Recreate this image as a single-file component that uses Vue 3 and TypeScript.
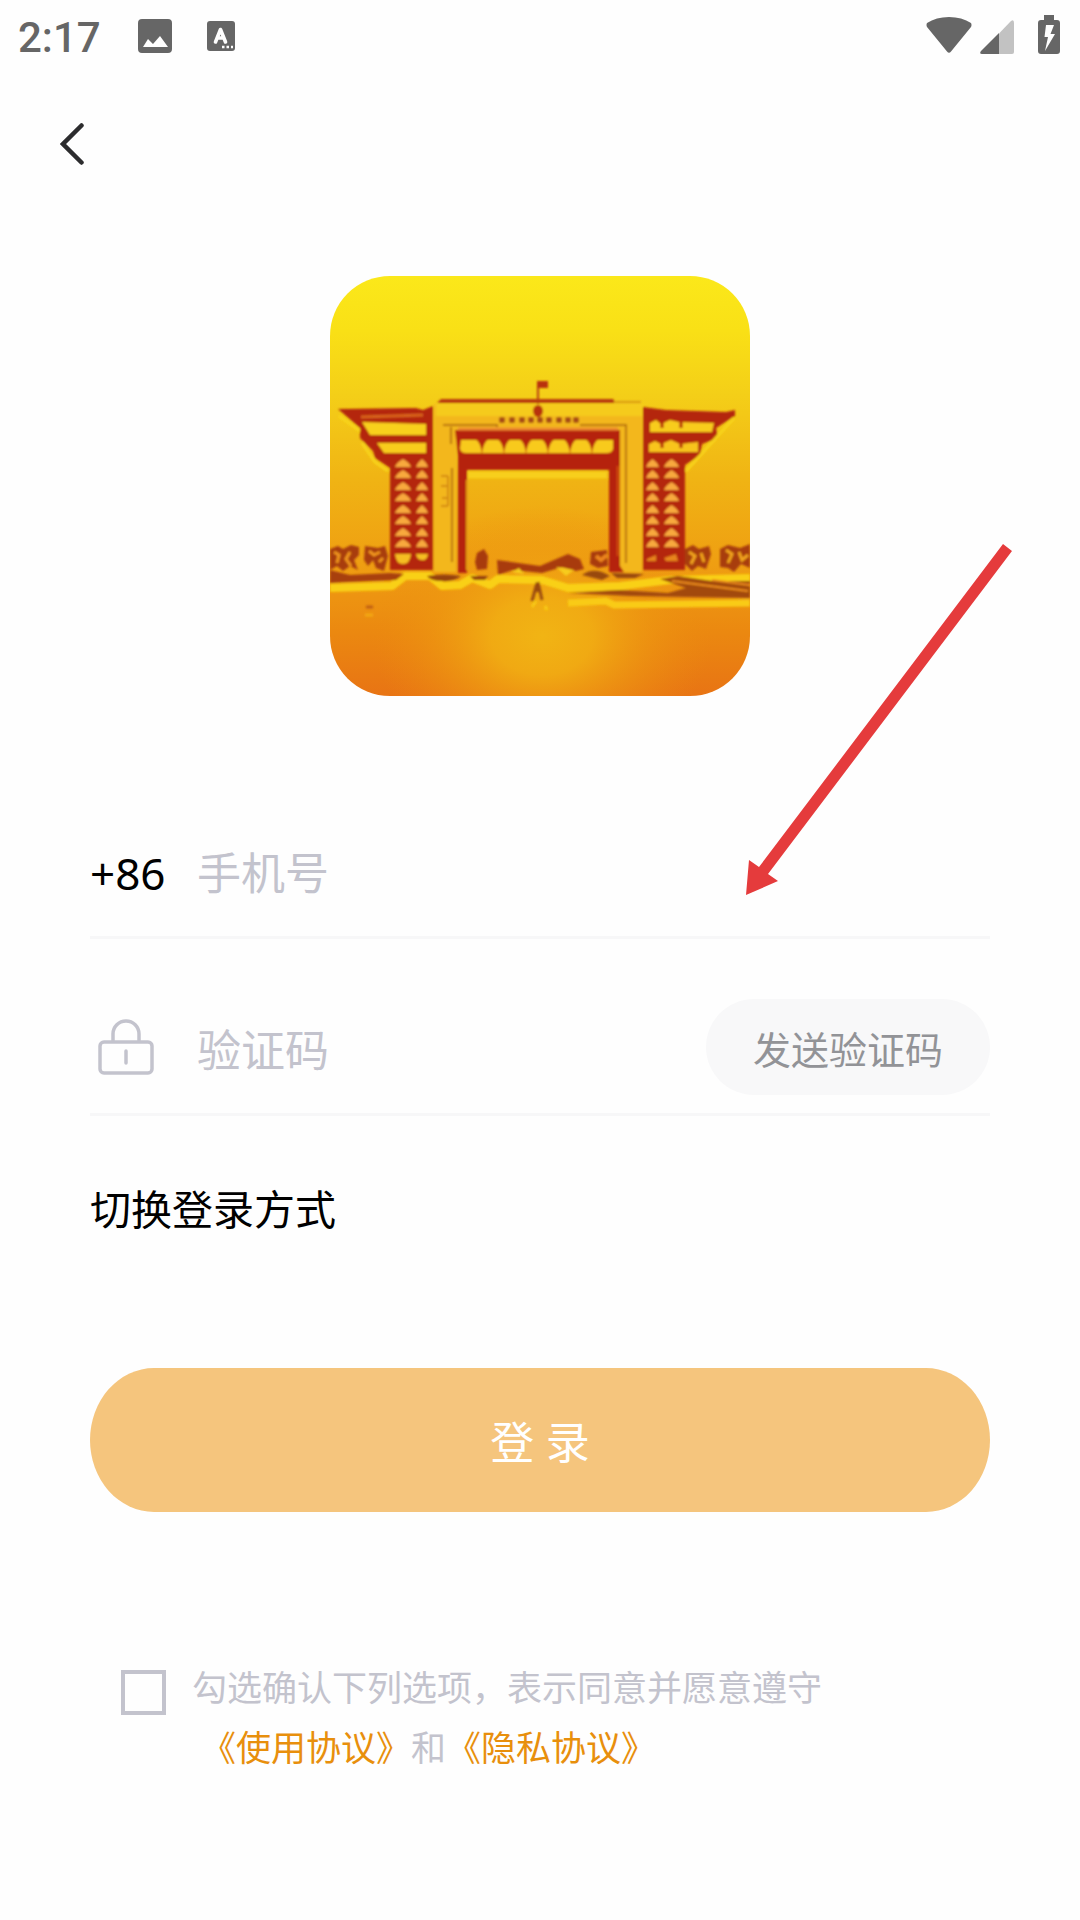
<script setup lang="ts">
import { ref } from 'vue'

const phone = ref('')
const code = ref('')
const agreed = ref(false)

const towerRows: number[] = [191, 202, 214, 225, 237, 248, 260, 271]
const signMarks: number[] = [172, 182, 192, 201, 210, 219, 229, 238, 246]
const notches: number[] = [152, 174, 196, 218, 240, 262]

function dome(x: number, y: number, w: number): string {
  const m = x + w / 2
  return `M${x} ${y} Q${x + 2} ${y - 5} ${m} ${y - 8} Q${x + w - 2} ${y - 5} ${x + w} ${y} Z`
}
</script>

<template>
  <div class="screen">
    <header class="status">
      <span class="clock">2:17</span>
      <svg class="ico-image" viewBox="0 0 34 34" aria-hidden="true">
        <path fill-rule="evenodd" d="M4 0H30Q34 0 34 4V30Q34 34 30 34H4Q0 34 0 30V4Q0 0 4 0ZM5 28H30L22 17L15 25L10 20Z" />
      </svg>
      <svg class="ico-input" viewBox="0 0 28 30" aria-hidden="true">
        <rect width="28" height="30" rx="3" />
        <path d="M8.500 21L13.500 8.500L18.500 21M10 17H17" fill="none" stroke="#fefefe" stroke-width="3.600" stroke-linecap="round" stroke-linejoin="round" />
        <path d="M15 26h2.500M19.500 26h2.500M24 26h2" stroke="#fefefe" stroke-width="2.500" />
      </svg>
      <span class="spacer"></span>
      <svg class="ico-wifi" viewBox="0 0 46 36" aria-hidden="true">
        <path d="M1 6Q10 0 23 0T45 6Q46 8 45 10L25 34.500Q23 37 21 34.500L1 10Q0 8 1 6Z" />
      </svg>
      <svg class="ico-signal" viewBox="0 0 34 34" aria-hidden="true">
        <path d="M19 13.500L31 1Q34-1 34 3V32Q34 34 32 34H19Z" fill="#c2c2c2" />
        <path d="M19 13V34H2Q-1 34 1 31Z" />
      </svg>
      <svg class="ico-battery" viewBox="0 0 22 39" aria-hidden="true">
        <path fill-rule="evenodd" d="M6 0H16V5H19Q22 5 22 8V36Q22 39 19 39H3Q0 39 0 36V8Q0 5 3 5H6ZM8 10L6.500 22H10L7 36L17 19H12.500L16 10Z" />
      </svg>
    </header>

    <nav class="nav">
      <button class="back" type="button" aria-label="返回">
        <svg viewBox="0 0 24 44" aria-hidden="true">
          <path d="M21.500 3.500L3 22L21.500 40.500" fill="none" stroke="#2c2c2e" stroke-width="4.500" stroke-linecap="round" />
        </svg>
      </button>
    </nav>

    <main class="content">
      <svg class="logo" viewBox="0 0 420 420" role="img" aria-label="校门">
        <defs>
          <linearGradient id="sky" x1="0" y1="0" x2="0" y2="1">
            <stop offset="0" stop-color="#fbe81a" />
            <stop offset="0.130" stop-color="#f9e016" />
            <stop offset="0.280" stop-color="#f4cf18" />
            <stop offset="0.480" stop-color="#f0b414" />
            <stop offset="0.680" stop-color="#ef9f12" />
            <stop offset="0.850" stop-color="#eb8810" />
            <stop offset="1" stop-color="#e87414" />
          </linearGradient>
          <radialGradient id="glow" gradientUnits="userSpaceOnUse" cx="0" cy="0" r="1" gradientTransform="translate(212 360) scale(170 130)">
            <stop offset="0" stop-color="#f1b414" />
            <stop offset="0.300" stop-color="#f1ae13" stop-opacity="0.900" />
            <stop offset="0.650" stop-color="#ee9a11" stop-opacity="0.500" />
            <stop offset="1" stop-color="#ec8c10" stop-opacity="0" />
          </radialGradient>
          <filter id="soft" x="-5%" y="-5%" width="110%" height="110%">
            <feGaussianBlur stdDeviation="1.100" />
          </filter>
          <clipPath id="frame"><rect width="420" height="420" rx="60" /></clipPath>
        </defs>
        <g clip-path="url(#frame)">
          <rect width="420" height="420" fill="url(#sky)" />
          <rect y="230" width="420" height="190" fill="url(#glow)" />
          <g filter="url(#soft)">
            <path d="M104 128H312V296H290V155H126V296H104Z" fill="#f3b71a" />
            <path d="M106 128H312V140H106Z" fill="#f5cb1c" />

            <!-- wings and towers -->
            <path d="M8 133L86 132L93 134L103 130V294H60V192L45 182L43 175L30 162V152Z" fill="#b4260e" />
            <path d="M313 131L336 134L396 136L405 134V140L386 152L388 162L372 168L370 179L355 189V294H313Z" fill="#b4260e" />
            <path d="M9 140L30 155M32 167L45 186L58 195M404 142L356 195" stroke="#f8d41a" stroke-width="3" fill="none" />
            <path d="M31 141L93 139" stroke="#d9641c" stroke-width="3" />
            <path d="M32 146L96 148V159H40Z" fill="#f8d01c" />
            <path d="M47 167H96V177H54Z" fill="#f8cc1c" />
            <path d="M320 147L326 144L331 148L340 144L349 146L384 147L382 156H320Z" fill="#f8cc1c" />
            <path d="M319 168L325 165L331 168L341 164L350 168L368 166V176H319Z" fill="#f8c41c" />
            <path d="M332 143V152M351 143V152M332 165V172M351 165V172" stroke="#b4260e" stroke-width="3" />
            <g fill="#f8a93c">
              <template v-for="y in towerRows" :key="y">
                <path :d="dome(65, y, 16)" />
                <path :d="dome(86, y, 12)" />
                <path :d="dome(316, y, 13)" />
                <path :d="dome(334, y, 15)" />
              </template>
            </g>
            <path d="M65 278H81Q80 288 73 288Q66 288 65 278ZM86 278H98Q97 285 92 284Q87 284 86 278Z" fill="#f5bd20" />
            <path d="M317 283L326 279V285H317ZM334 282L346 278L348 285H336Z" fill="#e8851c" />

            <!-- roof, flag and sign -->
            <path d="M107 127L111 123H283L286 127Z" fill="#b83a0e" />
            <path d="M284 126H311" stroke="#d99a18" stroke-width="2" />
            <path d="M208 105V128" stroke="#b8400e" stroke-width="2" />
            <path d="M207 105H218V112H207Z" fill="#b8300e" />
            <ellipse cx="208" cy="135" rx="5" ry="6" fill="#b8300e" />
            <rect v-for="x in signMarks" :key="x" :x="x - 3" y="141" width="6" height="6" rx="2" fill="#a84c12" />

            <!-- gate -->
            <path d="M113 149H167V151M250 149H296V287M121 151V168M122 192V286" stroke="#b9720f" stroke-width="2" fill="none" />
            <path d="M111 200H118M111 210H118M112 222H118M111 230H118M118 200V230" stroke="#d58b12" stroke-width="2" fill="none" />
            <path d="M125 154H290V290L294 296H279V194H137V297H128V180Z" fill="#b5210e" />
            <path d="M128 153H288" stroke="#ee8a30" stroke-width="3" />
            <path d="M131 164H283V173Q282 177 277 177H136Q130 177 130 172Z" fill="#f8ca1c" />
            <path v-for="x in notches" :key="x" :d="`M${x - 7} 163H${x + 7}Q${x + 1} 166 ${x} 178Q${x - 1} 166 ${x - 7} 163Z`" fill="#b5210e" />
            <path d="M138 199H277" stroke="#f7cf1a" stroke-width="7" />
            <path d="M137 204V294" stroke="#e39a14" stroke-width="2" />
            <path d="M288 190V280" stroke="#cc4a10" stroke-width="3" />

            <!-- trees -->
            <path d="M0 273L8 270L13 273L21 269L29 271V279L24 284L28 294L20 290L13 295L7 290L0 294ZM35 270L48 272L55 270L58 280L54 295L46 292L43 284L38 290L34 284Z" fill="#a83c10" />
            <path d="M4 276L9 279L7 287M20 276L16 283L21 290M39 275L44 279L50 276M49 286L53 282" stroke="#f0951c" stroke-width="3" fill="none" />
            <path d="M355 273L363 269L369 273L379 270L381 278L376 293L368 290L362 295L355 288ZM390 273L398 269L410 272L420 268V292L411 288L404 296L398 292L390 291Z" fill="#a83c10" />
            <path d="M359 276L365 280L361 288M371 277L374 286M396 274L402 278L398 287M409 276L412 284L418 279" stroke="#f2a51c" stroke-width="3" fill="none" />

            <!-- ground -->
            <path d="M0 312L62 310L75 300H100L112 310L130 309L142 302L160 309L168 303L212 304L238 312L290 310L340 304L420 302" fill="none" stroke="#f9d012" stroke-width="8" stroke-linejoin="round" />
            <path d="M0 294L20 299L60 297L74 298L66 304L18 306L0 307Z" fill="#a8400e" />
            <path d="M97 300Q114 297 131 300Q124 306 112 305Q100 305 97 300ZM140 300H158L155 304H144Z" fill="#96420f" />
            <path d="M147 277L154 273L158 280L157 293L147 294L145 286Z" fill="#a83a10" />
            <path d="M167 284L210 290L238 278L250 283L254 293L246 295L232 291L212 297L183 294L168 299Z" fill="#a83a10" />
            <path d="M226 291L244 294L236 300ZM182 296L189 292L194 298Z" fill="#f7cc1a" />
            <path d="M261 276L277 274L278 290L268 292L260 288Z" fill="#a83a10" />
            <path d="M266 280L271 284L277 279" stroke="#ec851a" stroke-width="4" fill="none" />
            <path d="M252 299Q264 290 280 300L272 304ZM281 297L314 298L305 302H287Z" fill="#98480e" />
            <path d="M238 317L290 314L338 317L356 312L330 303L348 300L382 305H420V322L358 321L300 320Z" fill="#a24a10" />
            <path d="M342 305L418 315M382 304L420 309" stroke="#ec8c1a" stroke-width="2" />
            <path d="M238 327L276 325L284 329L420 327" stroke="#f9cb12" stroke-width="7" fill="none" />
            <path d="M202 325L207 307L208 316M208 306L212 324" stroke="#9a4a10" stroke-width="3" fill="none" />
            <path d="M202 331L206 325M215 330L217 334" stroke="#f8ca14" stroke-width="3" />
            <path d="M36 331H43" stroke="#c0600e" stroke-width="3" />
            <path d="M35 339H43" stroke="#f3a814" stroke-width="3" />
          </g>
        </g>
      </svg>

      <form class="form" @submit.prevent>
        <div class="field">
          <label class="prefix" for="phone">+86</label>
          <input id="phone" v-model="phone" class="entry" type="tel" placeholder="手机号" />
        </div>
        <div class="field">
          <label class="badge" for="code" aria-label="验证码">
            <svg class="lock" viewBox="0 0 56 56" aria-hidden="true">
              <g fill="none" stroke="#c3c3cd" stroke-width="3.500">
                <rect x="2" y="23" width="52" height="31" rx="4" />
                <path d="M15 23V15A13 13 0 0 1 41 15V23" />
                <path d="M28 32V44" stroke-linecap="round" />
              </g>
            </svg>
          </label>
          <input id="code" v-model="code" class="entry" type="text" placeholder="验证码" />
          <button class="send" type="button">发送验证码</button>
        </div>

        <button class="switch" type="button">切换登录方式</button>
        <button class="login" type="submit">登 录</button>

        <div class="agreement">
          <input id="agree" v-model="agreed" class="tick" type="checkbox" />
          <div class="terms">
            <label for="agree">勾选确认下列选项，表示同意并愿意遵守</label>
            <p class="links"><a href="#terms">《使用协议》</a>和<a href="#privacy">《隐私协议》</a></p>
          </div>
        </div>
      </form>
    </main>

    <svg class="arrow" viewBox="0 0 266 352" aria-hidden="true">
      <path d="M257 0L266 7L22 330L32 337L0 351L3 316L13 323Z" fill="#e53b3c" />
    </svg>
  </div>
</template>

<style>
body {
  margin: 0;
  background: #fefefe;
}
</style>

<style scoped>
.screen {
  position: relative;
  min-height: 100vh;
  background: #fefefe;
  color: #000;
  font-family: "Noto Sans", "Noto Sans CJK SC", sans-serif;
  text-spacing-trim: space-all;
}

button,
input {
  margin: 0;
  padding: 0;
  border: 0;
  background: none;
  font-family: inherit;
}

.status {
  display: flex;
  align-items: center;
  box-sizing: border-box;
  height: 72px;
  padding: 0 20px 0 18px;
  fill: #666;
}

.clock {
  width: 120px;
  padding-top: 4px;
  color: #666;
  font: 500 42px/60px Roboto, sans-serif;
}

.ico-image {
  width: 34px;
  height: 34px;
}

.ico-input {
  width: 28px;
  height: 30px;
  margin-left: 35px;
}

.spacer {
  flex: 1;
}

.ico-wifi {
  width: 46px;
  height: 36px;
  margin-bottom: 2px;
}

.ico-signal {
  width: 34px;
  height: 34px;
  margin: 2px 24px 0 8px;
}

.ico-battery {
  width: 22px;
  height: 39px;
  margin-bottom: 4px;
}

.nav {
  display: flex;
  align-items: center;
  height: 144px;
  padding-left: 36px;
}

.back {
  display: flex;
  align-items: center;
  justify-content: center;
  width: 72px;
  height: 72px;
}

.back svg {
  width: 24px;
  height: 44px;
}

.content {
  padding: 60px 90px;
}

.logo {
  display: block;
  width: 420px;
  height: 420px;
  margin: 0 auto 66px;
}

.form {
  display: flex;
  flex-direction: column;
}

.field {
  display: flex;
  align-items: center;
  box-sizing: border-box;
  height: 177px;
  padding-top: 42px;
  border-bottom: 3px solid #f7f7f8;
}

.prefix,
.badge {
  flex: none;
  width: 107px;
}

.prefix {
  padding-top: 6px;
  font-size: 44px;
  line-height: 60px;
}

.lock {
  display: block;
  width: 56px;
  height: 56px;
  margin-left: 8px;
}

.entry {
  flex: 1;
  box-sizing: border-box;
  min-width: 0;
  height: 96px;
  padding-top: 6px;
  font-size: 44px;
  outline: none;
}

.entry::placeholder {
  color: #c3c3cd;
  opacity: 1;
}

.send {
  flex: none;
  width: 284px;
  height: 96px;
  border-radius: 48px;
  background: #f8f8f9;
  color: #929397;
  font-size: 38px;
}

.switch {
  align-self: flex-start;
  margin-top: 63px;
  color: #000;
  font-size: 41px;
  line-height: 60px;
}

.login {
  height: 144px;
  margin-top: 129px;
  border-radius: 64px / 72px;
  background: #f5c57d;
  color: #fff;
  font-size: 44px;
}

.agreement {
  display: flex;
  align-items: flex-start;
  gap: 26px;
  margin-top: 146px;
  padding-left: 31px;
}

.tick {
  flex: none;
  box-sizing: border-box;
  width: 45px;
  height: 45px;
  margin-top: 12px;
  border: 4px solid #c3c3cd;
  appearance: none;
}

.tick:checked {
  background: #e88f0c;
}

.terms {
  color: #c3c3cd;
  font-size: 35px;
  line-height: 60px;
}

.terms label {
  display: block;
}

.links {
  margin: 0;
  padding-left: 9px;
}

.links a {
  color: #e88f0c;
  text-decoration: none;
}

.arrow {
  position: absolute;
  top: 544px;
  right: 68px;
  width: 266px;
  height: 352px;
}
</style>
